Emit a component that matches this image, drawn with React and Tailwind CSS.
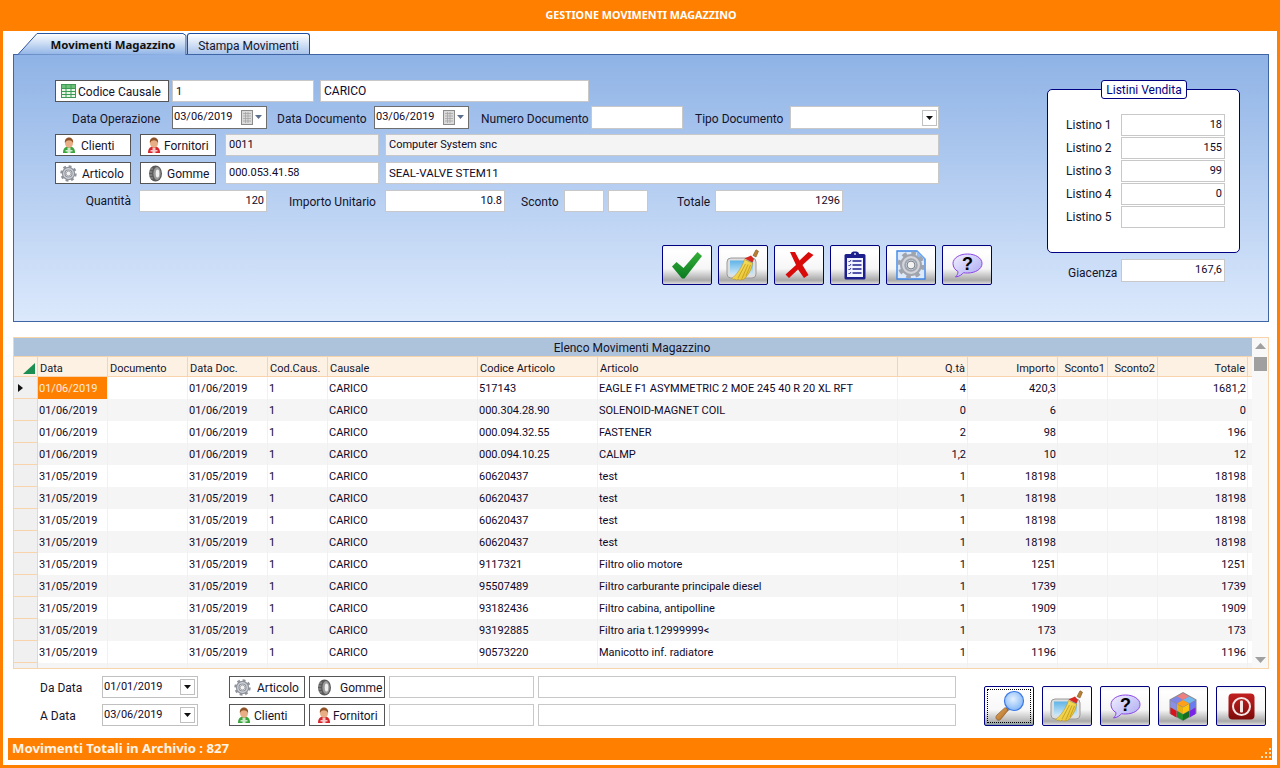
import React from "react";

const F = "font-['Roboto','Noto_Sans',sans-serif]";
const N = "font-['Noto_Sans','Open_Sans',sans-serif]";

function Gear({ s = 16, fill = "#8f939c" }) {
  return (
    <svg width={s} height={s} viewBox="0 0 32 32">
      <circle cx="16" cy="16" r="13" fill="none" stroke={fill} strokeWidth="5" strokeDasharray="5.1 5.1" />
      <circle cx="16" cy="16" r="9" fill="none" stroke={fill} strokeWidth="7" />
      <circle cx="16" cy="16" r="9" fill="none" stroke="#d2d4da" strokeWidth="2.500" />
      <circle cx="16" cy="16" r="4.500" fill="#f2f2f2" stroke="#666a72" strokeWidth="1" />
    </svg>
  );
}
function Tire({ s = 17 }) {
  return (
    <svg width={s} height={s} viewBox="0 0 17 17">
      <ellipse cx="8.500" cy="8.500" rx="6.500" ry="8" fill="#5a5a5a" />
      <path d="M3 4h3M2.200 7h3M2.200 10h3M3 13h3" stroke="#a8a8a8" strokeWidth=".8" />
      <ellipse cx="10" cy="8.500" rx="3.600" ry="6.500" fill="#9c9c9c" />
      <ellipse cx="10.500" cy="8.500" rx="1.800" ry="4" fill="#f0f0f0" />
    </svg>
  );
}
function User({ c = "#3aa53a", s = 16 }) {
  return (
    <svg width={s} height={s} viewBox="0 0 16 16">
      <path d="M2 16c0-4.500 2-6.500 6-6.500s6 2 6 6.500z" fill={c} />
      <path d="M6.500 16h3v-1.500h2V13h-2v-2h-3v2h-2v1.500h2z" fill="#ffffff" opacity=".75" />
      <ellipse cx="8" cy="6" rx="4" ry="5" fill="#e8ae86" />
      <path d="M3.900 6C3.400 1.800 6 .4 8 .4s4.600 1.400 4.100 5.600C11 3.900 9.500 3.300 8 3.300S5 3.900 3.900 6z" fill="#8f5226" />
    </svg>
  );
}
function TableIcon() {
  return (
    <svg width="15" height="14" viewBox="0 0 15 14">
      <rect x=".5" y=".5" width="14" height="13" fill="#e9f6e6" stroke="#3d9a55" />
      <rect x="1" y="1" width="13" height="3" fill="#6fc07a" />
      <path d="M.5 4.500h14M.5 7.500h14M.5 10.500h14M5 .5v13M10 .5v13" stroke="#3d9a55" fill="none" />
    </svg>
  );
}
function Check() {
  return (
    <svg width="32" height="28" viewBox="0 0 32 28">
      <defs>
        <linearGradient id="chk" x1="0" y1="0" x2="0" y2="1">
          <stop offset="0" stopColor="#35b03a" />
          <stop offset="1" stopColor="#0b7a20" />
        </linearGradient>
      </defs>
      <path d="M1 15.500 5.500 11l7 6L26.500 1 31 5 13.500 27.500h-2.500z" fill="url(#chk)" />
    </svg>
  );
}
function Cross() {
  return (
    <svg width="29" height="28" viewBox="0 0 29 28">
      <path d="M5 1h5l4.500 8.500L23.500 1 28.500 4 17.500 14l6 10-4.500 3-6-8.500L4 27 .5 23.500 11 14z" fill="#d90a0a" />
    </svg>
  );
}
function Broom() {
  return (
    <svg width="34" height="32" viewBox="0 0 34 32">
      <defs>
        <linearGradient id="scr" x1="0" y1="0" x2="0" y2="1">
          <stop offset="0" stopColor="#5fb4e8" />
          <stop offset="1" stopColor="#cfe8f8" />
        </linearGradient>
        <linearGradient id="brm" x1="0" y1="0" x2="1" y2="1">
          <stop offset="0" stopColor="#fff07a" />
          <stop offset="1" stopColor="#e3b61c" />
        </linearGradient>
      </defs>
      <rect x="1" y="9" width="29" height="20" rx="4" fill="#dedede" stroke="#9a9a9a" />
      <rect x="4" y="11.500" width="23" height="14" fill="url(#scr)" />
      <path d="M27 6.500 30 .8l2.500 1.400L30 8z" fill="#b98035" stroke="#80551d" strokeWidth=".6" />
      <path d="M18.500 9.500 25 6.500l3 3.500-1.500 3.500z" fill="#d9281f" />
      <path d="M18.500 10.500 26.500 14C26 21 21 28 17 31l-1.500-1-1.500 1.500-1.500-1.500-2 1-1.500-1-2 .500-1-1C10 26 16 19 18.500 10.500z" fill="url(#brm)" stroke="#b18a18" strokeWidth=".5" />
      <path d="M19.500 15 12 29M22 15.500 16 29.500M24.500 16 20 27" stroke="#b8901c" strokeWidth=".7" fill="none" />
    </svg>
  );
}
function Clipboard() {
  return (
    <svg width="22" height="29" viewBox="0 0 22 29">
      <rect x=".5" y="3" width="21" height="25.500" rx="1.500" fill="#1c1f8c" />
      <rect x="3" y="7" width="16" height="19" fill="#f2f4ff" />
      <path d="M7 3c0-2 2-2.500 4-2.500s4 .5 4 2.500h2v4H5V3z" fill="#1c1f8c" />
      <circle cx="11" cy="3" r="1" fill="#d5d8ff" />
      <path d="M8.500 10h9M8.500 14h9M8.500 18h9M8.500 22h9" stroke="#1c1f8c" strokeWidth="1.400" />
      <path d="M4.500 10l1 1 1.500-2M4.500 14l1 1 1.500-2M4.500 18l1 1 1.500-2M4.500 22l1 1 1.500-2" stroke="#1c1f8c" strokeWidth=".9" fill="none" />
    </svg>
  );
}
function GearDoc() {
  return (
    <div className="relative w-[30px] h-[30px]">
      <svg width="30" height="30" viewBox="0 0 30 30" className="absolute top-0 left-0">
        <path d="M1 1h20l8 8v20H1z" fill="#dbe9fb" stroke="#3f86e8" strokeWidth="1.400" />
        <path d="M21 1v8h8z" fill="#8fbcf5" />
      </svg>
      <div className="absolute top-[1px] left-[1px]">
        <Gear s={28} fill="#a0a4ad" />
      </div>
    </div>
  );
}
function Bubble() {
  return (
    <svg width="31" height="25" viewBox="0 0 31 25">
      <defs>
        <linearGradient id="bub" x1="0" y1="0" x2="1" y2="1">
          <stop offset="0" stopColor="#f3f1ff" />
          <stop offset="1" stopColor="#a9a6f2" />
        </linearGradient>
      </defs>
      <path d="M15.500 1C23.500 1 30 5 30 10.500S23.500 20 15.500 20c-1.500 0-2.500 0-4-.300C10 21.500 7.500 23.500 3.500 24c1.500-1.500 2.500-3 2.500-5.500C3 17 1 14 1 10.500 1 5 7.500 1 15.500 1z" fill="url(#bub)" stroke="#8b45e8" strokeWidth="1" />
      <text x="15.500" y="17" textAnchor="middle" fontFamily="'Liberation Sans',sans-serif" fontWeight="700" fontSize="18" fill="#000">?</text>
    </svg>
  );
}
function Magnifier() {
  return (
    <svg width="31" height="32" viewBox="0 0 31 32">
      <defs>
        <radialGradient id="lens" cx=".45" cy=".4" r=".65">
          <stop offset="0" stopColor="#e4f1ff" />
          <stop offset="1" stopColor="#7cb2f5" />
        </radialGradient>
        <linearGradient id="hdl" x1="0" y1="0" x2="1" y2="1">
          <stop offset="0" stopColor="#e8ad62" />
          <stop offset="1" stopColor="#a8641f" />
        </linearGradient>
      </defs>
      <path d="M13 17l3 3-3 1.500-2-2.500z" fill="#8a8f98" />
      <path d="M3 25 10.500 18c1.500-1 4 1.500 3 3L6.500 29.500C4 32 0 28 3 25z" fill="url(#hdl)" stroke="#7c4c18" strokeWidth=".6" />
      <circle cx="20" cy="11" r="9.500" fill="url(#lens)" stroke="#3b78e6" strokeWidth="1.200" />
    </svg>
  );
}
function Cube() {
  return (
    <svg width="28" height="29" viewBox="0 0 28 29">
      <path d="M14 0 27.500 7.500v14L14 29 .5 21.500v-14z" fill="#8a8a92" />
      <path d="M14 1 20 4.500 14 8 8 4.500z" fill="#ee7f7f" />
      <path d="M20 4.500 26.500 8 20 11.500 14 8z" fill="#6fb8f0" />
      <path d="M8 4.500 14 8 8 11.500 1.500 8z" fill="#7f86e8" />
      <path d="M14 8 20 11.500 14 15 8 11.500z" fill="#ff9f1a" />
      <path d="M1.500 8.500 7.500 12v6.500l-6-3.500z" fill="#8a8fe8" />
      <path d="M1.500 15.500l6 3.500v6.500l-6-3.500z" fill="#d6161c" />
      <path d="M8 12l6 3.500v6.500l-6-3.500z" fill="#e8b010" />
      <path d="M14 15.500 20 12v6.500L14 22z" fill="#ffc40a" />
      <path d="M20.500 12l6-3.500V15l-6 3.500z" fill="#6a7af0" />
      <path d="M20.500 19l6-3.500v6.500l-6 3.500z" fill="#7a22e8" />
      <path d="M8 19l6 3.500V28.500l-6-3.500z" fill="#1f8f2a" />
      <path d="M14 22.500l6-3.500V25l-6 3.500z" fill="#14701f" />
    </svg>
  );
}
function Power() {
  return (
    <svg width="27" height="27" viewBox="0 0 27 27">
      <defs>
        <linearGradient id="pw" x1="0" y1="0" x2="0" y2="1">
          <stop offset="0" stopColor="#c22020" />
          <stop offset="1" stopColor="#7e0a0a" />
        </linearGradient>
      </defs>
      <rect x=".5" y=".5" width="26" height="26" rx="4" fill="url(#pw)" />
      <circle cx="13.500" cy="13.500" r="8.500" fill="none" stroke="#f5e6e6" strokeWidth="2" />
      <rect x="12" y="7.500" width="3" height="12" rx="1" fill="#f5e6e6" />
    </svg>
  );
}
function Calendar() {
  return (
    <svg width="21" height="15" viewBox="0 0 21 15" className="shrink-0">
      <rect x=".5" y=".5" width="11" height="14" fill="#dadada" stroke="#8c8c8c" />
      <path d="M2 3.500h8M2 6h8M2 8.500h8M2 11h8M4.500 2v11M7 2v11" stroke="#a5a5a5" strokeWidth=".8" />
      <path d="M14 5h7l-3.500 4z" fill="#5b6f8c" />
    </svg>
  );
}

function Inp({ w, v = "", right, gray, h = "h-[22px]", fs = "text-[11px]", pb = "pb-[2px]" }) {
  return (
    <input
      readOnly
      value={v}
      className={`${w} ${h} ${fs} ${pb} shrink-0 border border-[#c8c8c8] outline-none text-[#10082a] ${F} ${right ? "text-right pr-[2px]" : "pl-[3px]"} ${gray ? "bg-[#f4f4f4]" : "bg-white"}`}
    />
  );
}
function Lbl({ cls, pt = "pt-[1px]", children }) {
  return <div className={`${cls} ${pt} shrink-0 text-[12px] leading-[16px] text-[#14142a] whitespace-nowrap ${F}`}>{children}</div>;
}
function Btn({ w, ic, text, pl, ml }) {
  return (
    <button className={`${w} ${pl} h-[22px] shrink-0 flex items-center border border-[#555555] bg-white text-[12px] text-[#14142a] whitespace-nowrap ${F}`}>
      {ic}
      <span className={`${ml} pt-[1px]`}>{text}</span>
    </button>
  );
}
function DateBox({ v }) {
  return (
    <div className={`w-[95px] h-[23px] shrink-0 flex items-center justify-between border border-[#6e6e6e] bg-white pl-[1px] pr-[4px] text-[11px] text-[#10082a] ${F}`}>
      <span>{v}</span>
      <Calendar />
    </div>
  );
}
function Caret() {
  return (
    <div className="w-[15px] h-[16px] border border-[#c0c0c0] flex items-center justify-center bg-white">
      <svg width="7" height="4" viewBox="0 0 7 4"><path d="M0 0h7L3.500 4z" fill="#111" /></svg>
    </div>
  );
}
function SmallDate({ v }) {
  return (
    <div className={`w-[96px] h-[22px] shrink-0 flex items-center justify-between border border-[#c0c0c0] bg-white pl-[1px] pr-[2px] text-[11px] text-[#10082a] ${F}`}>
      <span>{v}</span>
      <Caret />
    </div>
  );
}
function Big({ children, focus }) {
  return (
    <button
      className={`relative w-[50px] h-[40px] shrink-0 flex items-center justify-center rounded-[2px] border border-[#000080] ${focus ? "bg-[linear-gradient(#ffffff_0%,#f8f8f8_60%,#b5b5b5_90%,#88a0a0_100%)]" : "bg-[linear-gradient(#f4f4f4_0%,#ffffff_12%,#f6f6f6_60%,#a9a9a9_90%,#dcdcdc_100%)]"}`}
    >
      {children}
      {focus && <span className="absolute inset-[2px] border border-dotted border-black" />}
    </button>
  );
}

const G = "grid grid-cols-[24px_70px_80px_80px_60px_150px_120px_300px_70px_90px_50px_50px_90px]";
const heads = [
  ["Data", 0], ["Documento", 0], ["Data Doc.", 0], ["Cod.Caus.", 0], ["Causale", 0], ["Codice Articolo", 0], ["Articolo", 0],
  ["Q.tà", 1], ["Importo", 1], ["Sconto1", 1], ["Sconto2", 1], ["Totale", 1],
];
const rows = [
  ["01/06/2019", "01/06/2019", "517143", "EAGLE F1 ASYMMETRIC 2 MOE 245 40 R 20 XL RFT", "4", "420,3", "1681,2"],
  ["01/06/2019", "01/06/2019", "000.304.28.90", "SOLENOID-MAGNET COIL", "0", "6", "0"],
  ["01/06/2019", "01/06/2019", "000.094.32.55", "FASTENER", "2", "98", "196"],
  ["01/06/2019", "01/06/2019", "000.094.10.25", "CALMP", "1,2", "10", "12"],
  ["31/05/2019", "31/05/2019", "60620437", "test", "1", "18198", "18198"],
  ["31/05/2019", "31/05/2019", "60620437", "test", "1", "18198", "18198"],
  ["31/05/2019", "31/05/2019", "60620437", "test", "1", "18198", "18198"],
  ["31/05/2019", "31/05/2019", "60620437", "test", "1", "18198", "18198"],
  ["31/05/2019", "31/05/2019", "9117321", "Filtro olio motore", "1", "1251", "1251"],
  ["31/05/2019", "31/05/2019", "95507489", "Filtro carburante principale diesel", "1", "1739", "1739"],
  ["31/05/2019", "31/05/2019", "93182436", "Filtro cabina, antipolline", "1", "1909", "1909"],
  ["31/05/2019", "31/05/2019", "93192885", "Filtro aria t.12999999<", "1", "173", "173"],
  ["31/05/2019", "31/05/2019", "90573220", "Manicotto inf. radiatore", "1", "1196", "1196"],
  ["31/05/2019", "31/05/2019", "90573221", "Manicotto sup. radiatore", "1", "1196", "1196"],
];

function Cell({ children, right, sel }) {
  return (
    <div className={`h-[22px] leading-[23px] overflow-hidden whitespace-nowrap border-r border-[#fdeedd] text-[11px] ${right ? "text-right pr-[1px]" : "pl-[1px]"} ${sel ? "bg-[#ff8000] text-[#ffeedd]" : "text-[#10082a]"}`}>
      {children}
    </div>
  );
}

export default function App() {
  return (
    <div className={`w-[1280px] h-[768px] bg-[#ff8000] flex flex-col overflow-hidden ${F}`}>
      <div className={`h-[31px] shrink-0 flex items-center justify-center pl-[2px] text-[10.800px] font-bold text-white ${N}`}>
        GESTIONE MOVIMENTI MAGAZZINO
      </div>
      <div className="mx-[3px] mb-[3px] flex-1 bg-white flex flex-col">
        {/* tabs */}
        <div className="h-[23px] shrink-0 flex items-end pl-[15px]">
          <div className={`relative w-[169px] h-[21px] flex items-center justify-center pl-[21px] pt-[3px] text-[11.400px] font-bold text-[#111] z-10 ${N}`}>
            <svg width="169" height="22" viewBox="0 0 169 22" className="absolute top-0 left-0 h-[22px]">
              <defs>
                <linearGradient id="tab1" x1="0" y1="0" x2="0" y2="1">
                  <stop offset="0" stopColor="#ffffff" />
                  <stop offset="1" stopColor="#8fb3e6" />
                </linearGradient>
              </defs>
              <path d="M0 21.500 19 .5h146l3 2v19.500z" fill="url(#tab1)" />
              <path d="M-4 21.500h4L19 .5h146l3 2v19.500" fill="none" stroke="#2a559f" />
            </svg>
            <span className="relative">Movimenti Magazzino</span>
          </div>
          <div className="w-[123px] h-[21px] flex items-center justify-center pt-[3px] rounded-t-[3px] border border-b-0 border-[#1f4e9e] bg-[linear-gradient(#ffffff,#a9c4ec)] text-[12px] text-[#14142a]">
            Stampa Movimenti
          </div>
        </div>
        {/* panel */}
        <div className="ml-[10px] w-[1256px] h-[268px] shrink-0 border border-[#3f66a3] bg-[linear-gradient(#8fb3e6,#dce9fc)] flex pl-[41px]">
          <div className="w-[992px] shrink-0 pt-[25px] flex flex-col">
            <div className="flex items-center">
              <Btn w="w-[114px]" pl="pl-[5px]" ml="ml-[2px]" ic={<TableIcon />} text="Codice Causale" />
              <Inp w="ml-[3px] w-[142px]" v="1" pb="pb-0" />
              <Inp w="ml-[6px] w-[269px]" v="CARICO" fs="text-[12px]" pb="pb-0" />
            </div>
            <div className="flex items-center mt-[4px]">
              <Lbl pt="pt-[3px]" cls="w-[117px] pl-[17px]">Data Operazione</Lbl>
              <DateBox v="03/06/2019" />
              <Lbl pt="pt-[3px]" cls="w-[107px] pl-[10px]">Data Documento</Lbl>
              <DateBox v="03/06/2019" />
              <Lbl pt="pt-[3px]" cls="w-[122px] pl-[12px]">Numero Documento</Lbl>
              <Inp w="w-[92px]" h="h-[23px]" />
              <Lbl pt="pt-[3px]" cls="w-[107px] pl-[12px]">Tipo Documento</Lbl>
              <div className="w-[149px] h-[23px] shrink-0 flex items-center justify-end border border-[#c8c8c8] bg-white pr-[1px]">
                <Caret />
              </div>
            </div>
            <div className="flex items-center mt-[5px]">
              <Btn w="w-[76px]" pl="pl-[5px]" ml="ml-[4px]" ic={<User c="#3aa53a" />} text="Clienti" />
              <Btn w="ml-[9px] w-[76px]" pl="pl-[5px]" ml="ml-[2px]" ic={<User c="#d8262c" />} text="Fornitori" />
              <Inp w="ml-[9px] w-[154px]" v="0011" gray />
              <Inp w="ml-[6px] w-[554px]" v="Computer System snc" gray />
            </div>
            <div className="flex items-center mt-[6px]">
              <Btn w="w-[76px]" pl="pl-[4px]" ml="ml-[5px]" ic={<Gear s={17} />} text="Articolo" />
              <Btn w="ml-[9px] w-[76px]" pl="pl-[6px]" ml="ml-[3px]" ic={<Tire />} text="Gomme" />
              <Inp w="ml-[9px] w-[154px]" v="000.053.41.58" />
              <Inp w="ml-[6px] w-[554px]" v="SEAL-VALVE STEM11" fs="text-[11.500px]" pb="pb-0" />
            </div>
            <div className="flex items-center mt-[6px]">
              <Lbl cls="w-[84px] pr-[8px] text-right" pt="pt-0">Quantità</Lbl>
              <Inp w="w-[128px]" v="120" right />
              <Lbl cls="w-[118px] pl-[22px]">Importo Unitario</Lbl>
              <Inp w="w-[120px]" v="10.8" right />
              <Lbl cls="w-[59px] pl-[16px]">Sconto</Lbl>
              <Inp w="w-[40px]" />
              <Inp w="ml-[4px] w-[40px]" />
              <Lbl cls="w-[67px] pl-[29px]">Totale</Lbl>
              <Inp w="w-[128px]" v="1296" right />
            </div>
            <div className="flex gap-[6px] ml-[607px] mt-[33px]">
              <Big><Check /></Big>
              <Big><Broom /></Big>
              <Big><Cross /></Big>
              <Big><Clipboard /></Big>
              <Big><GearDoc /></Big>
              <Big><Bubble /></Big>
            </div>
          </div>
          <div className="flex flex-col pt-[34px]">
            <div className="relative w-[193px] h-[164px] border border-[#000080] rounded-[5px] bg-white pt-[24px] pl-[18px] flex flex-col gap-[1px]">
              <div className="absolute -top-[10px] left-[53px] w-[86px] h-[19px] border border-[#000080] rounded-[3px] bg-white flex items-center justify-center text-[12px] text-[#000080]">
                Listini Vendita
              </div>
              {[["Listino 1", "18"], ["Listino 2", "155"], ["Listino 3", "99"], ["Listino 4", "0"], ["Listino 5", ""]].map(([l, v]) => (
                <div key={l} className="flex items-center">
                  <Lbl cls="w-[55px]" pt="pt-0">{l}</Lbl>
                  <Inp w="w-[104px]" v={v} right />
                </div>
              ))}
            </div>
            <div className="flex items-center mt-[6px]">
              <Lbl cls="w-[74px] pl-[21px]" pt="pt-[5px]">Giacenza</Lbl>
              <Inp w="w-[104px]" h="h-[23px]" v="167,6" right />
            </div>
          </div>
        </div>
        {/* grid */}
        <div className="ml-[10px] mt-[15px] w-[1256px] h-[332px] shrink-0 border border-[#f8d4ac] flex overflow-hidden">
          <div className="w-[1238px] shrink-0 flex flex-col">
            <div className="h-[19px] shrink-0 bg-[#adc3dc] border-b border-[#f8d4ac] flex items-center justify-center pt-[2px] pr-[2px] text-[12px] text-[#14142a]">
              Elenco Movimenti Magazzino
            </div>
            <div className={`${G} h-[20px] shrink-0 bg-[#fdf1e4] border-b border-[#f8d4ac] text-[11px] text-[#14142a]`}>
              <div className="border-r border-[#f8d4ac] flex items-end justify-end pr-[2px] pb-[2px]">
                <svg width="12" height="11" viewBox="0 0 12 11"><path d="M12 0v11H0z" fill="#1b8f52" /></svg>
              </div>
              {heads.map(([h, r]) => (
                <div key={h} className={`border-r border-[#f8d4ac] leading-[23px] whitespace-nowrap overflow-hidden ${r ? "text-right pr-[2px]" : "pl-[2px]"}`}>{h}</div>
              ))}
            </div>
            <div className="flex-1 overflow-hidden">
              {rows.map((r, i) => (
                <div key={i} className={`${G} h-[22px] ${i % 2 ? "bg-[#f5f5f5]" : "bg-white"}`}>
                  <div className="h-[22px] bg-[#f0f0f0] border-r border-b border-[#f8d4ac] flex items-center pl-[4px]">
                    {i === 0 && <svg width="5" height="8" viewBox="0 0 5 8"><path d="M0 0l5 4-5 4z" fill="#111" /></svg>}
                  </div>
                  <Cell sel={i === 0}>{r[0]}</Cell>
                  <Cell></Cell>
                  <Cell>{r[1]}</Cell>
                  <Cell>1</Cell>
                  <Cell>CARICO</Cell>
                  <Cell>{r[2]}</Cell>
                  <Cell>{r[3]}</Cell>
                  <Cell right>{r[4]}</Cell>
                  <Cell right>{r[5]}</Cell>
                  <Cell></Cell>
                  <Cell></Cell>
                  <Cell right>{r[6]}</Cell>
                </div>
              ))}
            </div>
          </div>
          <div className="flex-1 bg-[#f8f8f8] flex flex-col items-center pt-[5px]">
            <svg width="11" height="6" viewBox="0 0 11 6"><path d="M0 6 5.500 0 11 6z" fill="#a0a0a0" /></svg>
            <div className="w-[13px] h-[14px] mt-[8px] bg-[#a0a0a0]" />
            <div className="flex-1" />
            <svg width="11" height="6" viewBox="0 0 11 6" className="mb-[5px]"><path d="M0 0h11L5.500 6z" fill="#a0a0a0" /></svg>
          </div>
        </div>
        {/* filters */}
        <div className="mt-[7px] h-[50px] shrink-0 flex">
          <div className="flex flex-col gap-[6px] pl-[37px]">
            <div className="flex items-center">
              <Lbl cls="w-[62px]">Da Data</Lbl>
              <SmallDate v="01/01/2019" />
              <Btn w="ml-[31px] w-[76px]" pl="pl-[4px]" ml="ml-[6px]" ic={<Gear s={17} />} text="Articolo" />
              <Btn w="ml-[4px] w-[76px]" pl="pl-[6px]" ml="ml-[7px]" ic={<Tire />} text="Gomme" />
              <Inp w="ml-[4px] w-[145px]" />
              <Inp w="ml-[4px] w-[418px]" />
            </div>
            <div className="flex items-center">
              <Lbl cls="w-[62px]">A Data</Lbl>
              <SmallDate v="03/06/2019" />
              <Btn w="ml-[31px] w-[76px]" pl="pl-[6px]" ml="ml-[2px]" ic={<User c="#3aa53a" />} text="Clienti" />
              <Btn w="ml-[4px] w-[76px]" pl="pl-[6px]" ml="ml-[1px]" ic={<User c="#d8262c" />} text="Fornitori" />
              <Inp w="ml-[4px] w-[145px]" />
              <Inp w="ml-[4px] w-[418px]" />
            </div>
          </div>
          <div className="ml-[28px] self-end flex gap-[8px]">
            <Big focus><Magnifier /></Big>
            <Big><Broom /></Big>
            <Big><Bubble /></Big>
            <Big><Cube /></Big>
            <Big><Power /></Big>
          </div>
        </div>
        {/* status */}
        <div className={`relative mx-[5px] mt-[12px] h-[22px] shrink-0 bg-[#ff8000] flex items-center pl-[4px] text-[13.200px] font-bold text-[#fff4e8] ${N}`}>
          Movimenti Totali in Archivio : 827
          <svg width="12" height="12" viewBox="0 0 12 12" className="absolute right-0 bottom-0">
            <path d="M9 0h2v2H9zM5 4h2v2H5zM9 4h2v2H9zM1 8h2v2H1zM5 8h2v2H5zM9 8h2v2H9z" fill="#ffe0bd" />
          </svg>
        </div>
      </div>
    </div>
  );
}
